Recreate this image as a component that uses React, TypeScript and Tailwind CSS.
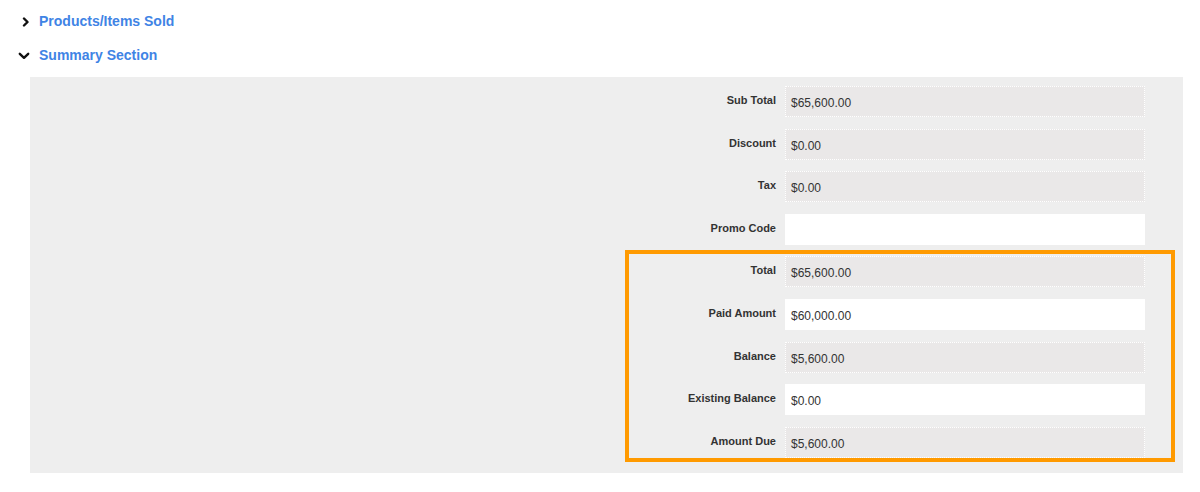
import { ReactNode } from 'react';

type Row = { label: string; value: string; editable?: boolean };

const rows: Row[] = [
  { label: 'Sub Total', value: '$65,600.00' },
  { label: 'Discount', value: '$0.00' },
  { label: 'Tax', value: '$0.00' },
  { label: 'Promo Code', value: '', editable: true },
  { label: 'Total', value: '$65,600.00' },
  { label: 'Paid Amount', value: '$60,000.00', editable: true },
  { label: 'Balance', value: '$5,600.00' },
  { label: 'Existing Balance', value: '$0.00', editable: true },
  { label: 'Amount Due', value: '$5,600.00' },
];

function ChevronRight() {
  return (
    <svg width="8" height="10" viewBox="0 0 8 10" className="shrink-0">
      <path d="M2 1.5 L5.5 5 L2 8.5" fill="none" stroke="#111" strokeWidth="2.4" strokeLinecap="round" strokeLinejoin="round" />
    </svg>
  );
}

function ChevronDown() {
  return (
    <svg width="12" height="8" viewBox="0 0 12 8" className="shrink-0">
      <path d="M1.8 1.8 L6 5.8 L10.2 1.8" fill="none" stroke="#111" strokeWidth="2.4" strokeLinecap="round" strokeLinejoin="round" />
    </svg>
  );
}

function Heading({ icon, children }: { icon: ReactNode; children: ReactNode }) {
  return (
    <div className="flex h-[34px] items-center">
      <div className="flex w-[39px] justify-end pr-[9px] pt-[1px]">{icon}</div>
      <span className="text-[14px] font-bold text-[#3f84e5]">{children}</span>
    </div>
  );
}

function Field({ row }: { row: Row }) {
  return (
    <div className="flex h-[31px] items-start">
      <label className="w-[150px] pt-[7px] text-right text-[11px] font-bold leading-[14px] text-[#333]">
        {row.label}
      </label>
      <div
        className={
          row.editable
            ? 'ml-[9px] flex h-[31px] w-[360px] items-center bg-white px-[6px] text-[12px] text-[#333]'
            : 'ml-[9px] flex h-[31px] w-[360px] items-center border border-dotted border-white bg-[#eae8e8] px-[5px] text-[12px] text-[#333]'
        }
      >
        <span className="pt-[3px]">{row.value}</span>
      </div>
    </div>
  );
}

export default function App() {
  return (
    <div className="h-[492px] w-[1200px] bg-white font-['Liberation_Sans',Arial,sans-serif]">
      <div className="pt-[4px]">
        <Heading icon={<ChevronRight />}>Products/Items Sold</Heading>
        <Heading icon={<ChevronDown />}>Summary Section</Heading>
      </div>
      <div className="relative ml-[30px] mt-[5px] w-[1153px] bg-[#eeeeee] pb-[15px] pl-[596px] pt-[9px]">
        <div className="flex flex-col gap-[11.6px]">
          {rows.map((r) => (
            <Field key={r.label} row={r} />
          ))}
        </div>
        <div className="pointer-events-none absolute left-[595px] top-[173px] h-[212px] w-[550px] border-4 border-[#ff9a00]" />
      </div>
    </div>
  );
}
